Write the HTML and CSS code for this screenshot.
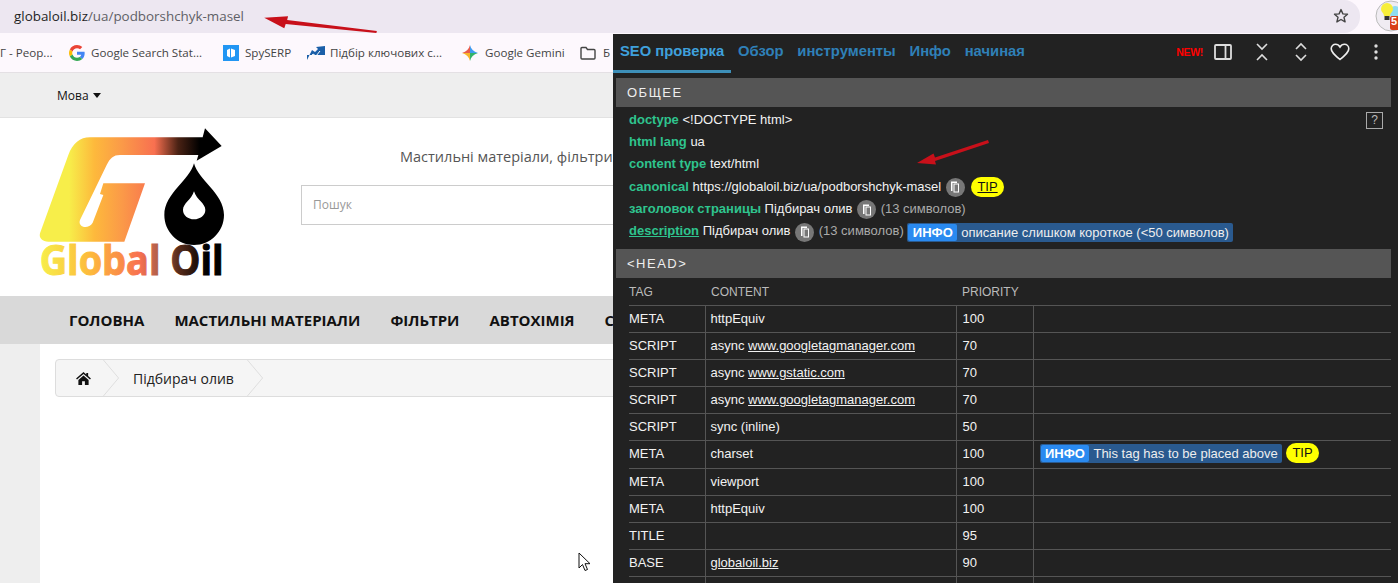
FILE: index.html
```html
<!DOCTYPE html>
<html lang="uk">
<head>
<meta charset="utf-8">
<title>Global Oil</title>
<link rel="stylesheet" href="styles.css">
</head>
<body>
<div class="screen">
  <header class="topbar">
    <div class="omnibox">
      <span class="url"><span class="url-host">globaloil.biz</span>/ua/podborshchyk-masel</span>
      <svg class="star" viewBox="0 0 16 16" width="16" height="16"><path d="M8 1.6l1.9 4.3 4.6.4-3.5 3 1.1 4.6L8 11.5 3.9 13.9 5 9.3l-3.5-3 4.6-.4z" fill="none" stroke="#444" stroke-width="1.4" stroke-linejoin="round"/></svg>
    </div>
    <div class="ext">
      <svg viewBox="0 0 32 32" width="32" height="32">
        <circle cx="16" cy="16" r="15" fill="#f0ecf2" stroke="#bbb"/>
        <circle cx="20" cy="12" r="6" fill="#8fdcf0"/>
        <path d="M6 9a6 6 0 0 1 12 0c0 3-3 4-3 7h-6c0-3-3-4-3-7z" fill="#f7ee3a"/>
        <rect x="9.500" y="16" width="5" height="4" fill="#333"/>
        <rect x="15" y="16" width="14" height="14" rx="2" fill="#d8401a"/>
      </svg>
      <span class="ext-badge">5</span>
    </div>
  </header>

  <nav class="bookmarks">
    <span class="bm bm-first">Г - Реор...</span>
    <span class="bm bm-google">
      <svg viewBox="0 0 48 48" width="16" height="16"><path fill="#EA4335" d="M24 9.500c3.500 0 6.700 1.300 9.100 3.400l6.800-6.800C35.800 2.400 30.200 0 24 0 14.600 0 6.500 5.400 2.600 13.200l7.900 6.200C12.400 13.600 17.700 9.500 24 9.500z"/><path fill="#4285F4" d="M47 24.500c0-1.600-.2-3.100-.4-4.500H24v9h12.900c-.6 3-2.300 5.500-4.800 7.200l7.700 6C44.300 38 47 31.800 47 24.500z"/><path fill="#FBBC05" d="M10.500 28.600c-.5-1.400-.8-3-.8-4.600s.3-3.200.8-4.600l-7.900-6.200C.9 16.500 0 20.100 0 24s.9 7.500 2.600 10.800z"/><path fill="#34A853" d="M24 48c6.500 0 11.900-2.100 15.900-5.800l-7.700-6c-2.200 1.500-4.900 2.300-8.200 2.300-6.300 0-11.600-4.100-13.500-9.900l-7.900 6.200C6.500 42.600 14.600 48 24 48z"/></svg>
      Google Search Stat...
    </span>
    <span class="bm bm-spy">
      <svg viewBox="0 0 16 16" width="16" height="16"><rect width="16" height="16" fill="#2196f3"/><path d="M4 5l3-1.500v9L4 11zM8 3.500l4 1.500v6l-4 1.500z" fill="#fff"/></svg>
      SpySERP
    </span>
    <span class="bm bm-tool">
      <svg viewBox="0 0 18 14" width="18" height="14"><path d="M0 14L5 4l3 2 3-3-2-2 9-1v9H0z" fill="#1a5fa8"/><path d="M3 12l3-4 3 2 4-5" fill="none" stroke="#fff" stroke-width="1"/></svg>
      Підбір ключових с...
    </span>
    <span class="bm bm-gem">
      <svg viewBox="0 0 16 16" width="16" height="16"><path d="M8 0c.9 4 3.600 6.900 8 8H8z" fill="#3f9bf0"/><path d="M8 0c-.9 4-3.600 6.900-8 8h8z" fill="#e85a4a"/><path d="M0 8c4.400 1.100 7.100 4 8 8V8z" fill="#f7b52c"/><path d="M16 8c-4.400 1.100-7.100 4-8 8V8z" fill="#33b36b"/></svg>
      Google Gemini
    </span>
    <span class="bm bm-folder">
      <svg viewBox="0 0 16 14" width="16" height="14"><path d="M1 2.500a1 1 0 0 1 1-1h4l1.500 2H14a1 1 0 0 1 1 1V12a1 1 0 0 1-1 1H2a1 1 0 0 1-1-1z" fill="none" stroke="#444" stroke-width="1.400"/></svg>
      Б
    </span>
  </nav>

  <main class="site">
    <div class="site-top"><span class="lang">Мова</span><span class="caret"></span></div>
    <div class="site-head">
      <svg class="logo" viewBox="0 0 660 510" width="220" height="170">
        <defs>
          <linearGradient id="logoG" gradientUnits="userSpaceOnUse" x1="60" y1="0" x2="605" y2="0">
            <stop offset="0" stop-color="#f7ee4a"/><stop offset=".16" stop-color="#f7ee4a"/><stop offset=".3" stop-color="#fdb93c"/><stop offset=".45" stop-color="#fb9a48"/><stop offset=".63" stop-color="#f87050"/><stop offset=".76" stop-color="#4a2214"/><stop offset=".88" stop-color="#000"/>
          </linearGradient>
          <linearGradient id="logoT" gradientUnits="userSpaceOnUse" x1="60" y1="0" x2="605" y2="0">
            <stop offset="0" stop-color="#f7ee4a"/><stop offset=".28" stop-color="#fdb93c"/><stop offset=".55" stop-color="#f87050"/><stop offset=".68" stop-color="#9a5a48"/><stop offset=".76" stop-color="#5a2c1a"/><stop offset=".92" stop-color="#000"/>
          </linearGradient>
        </defs>
        <path fill="url(#logoG)" d="M60 340L145 105C158 70 180 52 210 52H548L555 25L605 78L530 122L535 105H300C280 105 270 115 260 135L180 300C172 322 205 330 218 308L250 225L240 222L250 190H375L313 365H85C68 365 56 355 60 340Z"/>
        <path fill="#000" fill-rule="evenodd" d="M522 130C510 180 433 220 433 285C433 335 473 375 522 375C571 375 612 335 612 285C612 220 534 180 522 130ZM522 214C530 240 556 250 556 270C556 286 540 298 522 298C504 298 489 286 489 270C489 250 514 240 522 214Z"/>
        <text class="logo-text" x="59" y="465" textLength="552" lengthAdjust="spacingAndGlyphs" fill="url(#logoT)" stroke="url(#logoT)" stroke-width="3">Global Oil</text>
      </svg>
      <div class="head-right">
        <div class="tagline">Мастильні матеріали, фільтри</div>
        <div class="search">Пошук</div>
      </div>
    </div>
    <div class="menu">
      <span>ГОЛОВНА</span><span>МАСТИЛЬНІ МАТЕРІАЛИ</span><span>ФІЛЬТРИ</span><span>АВТОХІМІЯ</span><span>С</span>
    </div>
    <div class="content-wrap">
      <div class="content">
        <div class="crumbs">
          <svg class="home" viewBox="0 0 16 14" width="15" height="13"><path d="M8 0L0 7l1 1.200L8 2.200l7 6L16 7l-3-2.600V1h-2v1.700zM2.500 8.500V14H6.500V10h3v4h4V8.500L8 3.800z" fill="#111"/></svg>
          <svg class="chev" viewBox="0 0 18 38" width="18" height="36"><path d="M1 0L17 19L1 38" fill="none" stroke="#ddd"/></svg>
          <span class="crumb-text">Підбирач олив</span>
          <svg class="chev" viewBox="0 0 18 38" width="18" height="36"><path d="M1 0L17 19L1 38" fill="none" stroke="#ddd"/></svg>
        </div>
      </div>
    </div>
  </main>

  <aside class="panel">
    <div class="tabs">
      <span class="tab tab-active">SEO проверка</span>
      <span class="tab">Обзор</span>
      <span class="tab">инструменты</span>
      <span class="tab">Инфо</span>
      <span class="tab">начиная</span>
      <span class="tools">
        <span class="new">NEW!</span>
        <svg class="t-panel" viewBox="0 0 18 18" width="18" height="18"><rect x="1" y="2" width="16" height="14" rx="1" fill="none" stroke="#ddd" stroke-width="1.800"/><path d="M11.500 2v14" stroke="#ddd" stroke-width="1.800"/></svg>
        <svg class="t-collapse" viewBox="0 0 14 20" width="14" height="20"><path d="M2 2l5 5 5-5M2 18l5-5 5 5" fill="none" stroke="#ddd" stroke-width="1.600"/></svg>
        <svg class="t-expand" viewBox="0 0 14 20" width="14" height="20"><path d="M2 7l5-5 5 5M2 13l5 5 5-5" fill="none" stroke="#ddd" stroke-width="1.600"/></svg>
        <svg class="t-heart" viewBox="0 0 20 18" width="20" height="18"><path d="M10 16.500C4 11.500 1.200 9 1.200 5.700 1.200 3 3.300 1.300 5.600 1.300c1.800 0 3.400 1 4.400 2.700 1-1.700 2.600-2.700 4.400-2.700 2.300 0 4.400 1.700 4.400 4.400 0 3.300-2.800 5.800-8.800 10.800z" fill="none" stroke="#eee" stroke-width="1.600"/></svg>
        <svg class="t-dots" viewBox="0 0 4 16" width="4" height="16"><circle cx="2" cy="2" r="1.700" fill="#ddd"/><circle cx="2" cy="8" r="1.700" fill="#ddd"/><circle cx="2" cy="14" r="1.700" fill="#ddd"/></svg>
      </span>
    </div>

    <h2 class="section">ОБЩЕЕ</h2>
    <div class="general">
      <span class="help">?</span>
      <div class="row"><b>doctype</b> &lt;!DOCTYPE html&gt;</div>
      <div class="row"><b>html lang</b> ua</div>
      <div class="row"><b>content type</b> text/html</div>
      <div class="row"><b>canonical</b> https://globaloil.biz/ua/podborshchyk-masel
        <span class="copy"><svg viewBox="0 0 10 12" width="10" height="12"><path d="M1 .5h6v1.500H2.500v8H1zM3.500 2.500H9v9H3.500zM4.500 3.500v7H8v-7z" fill="#fff" fill-rule="evenodd"/></svg></span>
        <span class="tip">TIP</span></div>
      <div class="row"><b>заголовок страницы</b> Підбирач олив
        <span class="copy"><svg viewBox="0 0 10 12" width="10" height="12"><path d="M1 .5h6v1.500H2.500v8H1zM3.500 2.500H9v9H3.500zM4.500 3.500v7H8v-7z" fill="#fff" fill-rule="evenodd"/></svg></span>
        <span class="muted">(13 символов)</span></div>
      <div class="row"><b class="link-b">description</b> Підбирач олив
        <span class="copy"><svg viewBox="0 0 10 12" width="10" height="12"><path d="M1 .5h6v1.500H2.500v8H1zM3.500 2.500H9v9H3.500zM4.500 3.500v7H8v-7z" fill="#fff" fill-rule="evenodd"/></svg></span>
        <span class="muted">(13 символов)</span>
        <span class="info"><span class="info-k">ИНФО</span>описание слишком короткое (&lt;50 символов)</span></div>
    </div>

    <h2 class="section section-head">&lt;HEAD&gt;</h2>
    <table class="tags">
      <thead><tr><th>TAG</th><th>CONTENT</th><th>PRIORITY</th><th></th></tr></thead>
      <tbody>
        <tr><td>META</td><td>httpEquiv</td><td>100</td><td></td></tr>
        <tr><td>SCRIPT</td><td>async <u>www.googletagmanager.com</u></td><td>70</td><td></td></tr>
        <tr><td>SCRIPT</td><td>async <u>www.gstatic.com</u></td><td>70</td><td></td></tr>
        <tr><td>SCRIPT</td><td>async <u>www.googletagmanager.com</u></td><td>70</td><td></td></tr>
        <tr><td>SCRIPT</td><td>sync (inline)</td><td>50</td><td></td></tr>
        <tr class="tall"><td>META</td><td>charset</td><td>100</td><td><span class="info"><span class="info-k">ИНФО</span>This tag has to be placed above</span> <span class="tip tip-plain">TIP</span></td></tr>
        <tr><td>META</td><td>viewport</td><td>100</td><td></td></tr>
        <tr><td>META</td><td>httpEquiv</td><td>100</td><td></td></tr>
        <tr><td>TITLE</td><td></td><td>95</td><td></td></tr>
        <tr><td>BASE</td><td><u>globaloil.biz</u></td><td>90</td><td></td></tr>
        <tr><td></td><td></td><td></td><td></td></tr>
      </tbody>
    </table>
  </aside>

  <svg class="annot annot-a" viewBox="0 0 120 22" width="115" height="21"><path d="M118 20L24 8.500l1-4L0 6l21 11 1.500-4.500L117.500 22z" fill="#c8101a"/></svg>
  <svg class="annot annot-b" viewBox="0 0 72 26" width="72" height="26"><path d="M71 1L18 18.500l-1.500-4L0 24l19 1.500-1-3.500L72 4z" fill="#c8101a"/></svg>
  <svg class="annot annot-c" viewBox="0 0 14 20" width="14" height="20"><path d="M1 1v15l3.500-3.500 2.500 6 2.500-1-2.500-5.800h5z" fill="#fff" stroke="#111" stroke-width="1"/></svg>
</div>
</body>
</html>
```
FILE: styles.css
```css
* { box-sizing: border-box; }
html, body { margin: 0; padding: 0; }
body { width: 1398px; height: 583px; overflow: hidden; background: #fff; font-family: "Open Sans", sans-serif; }
.screen { position: relative; width: 1398px; height: 583px; overflow: hidden; display: flex; flex-direction: column; }

.topbar { height: 33px; background: #fdf7fd; display: flex; flex: none; }
.omnibox { width: 1360px; height: 33px; background: #ede7f1; border-radius: 0 16px 16px 0; display: flex; align-items: center; padding: 0 11px 1px 14px; justify-content: space-between; }
.url { font: 13.400px "Open Sans", sans-serif; color: #5f5f66; }
.url-host { color: #1f1f1f; }
.ext { position: relative; width: 38px; padding-left: 15px; overflow: hidden; }
.ext-badge { position: absolute; left: 31px; top: 15px; font: bold 11px "Liberation Sans", sans-serif; color: #fff; }

.bookmarks { height: 40px; background: #fdf8fd; border-bottom: 1px solid #e4e0e4; display: flex; align-items: center; font: 11.600px "Open Sans", sans-serif; color: #444; white-space: nowrap; flex: none; }
.bm { display: flex; align-items: center; gap: 6px; }
.bm-first { width: 69px; }
.bm-google { width: 154px; }
.bm-spy { width: 84px; }
.bm-tool { width: 155px; gap: 5px; }
.bm-gem { width: 118px; gap: 7px; }
.bm-folder { gap: 7px; }

.site { flex: 1; display: flex; flex-direction: column; min-height: 0; overflow: hidden; }
.site-top { height: 45px; background: #eee; border-bottom: 1px solid #e2e2e2; display: flex; align-items: center; gap: 4px; padding-left: 57px; font-size: 12px; color: #111; flex: none; }
.caret { width: 0; height: 0; border-left: 4.500px solid transparent; border-right: 4.500px solid transparent; border-top: 5px solid #111; }
.site-head { height: 178px; background: #fff; display: flex; flex: none; }
.logo { margin: 2px 0 0 20px; flex: none; }
.logo-text { font: 700 122px "Open Sans", sans-serif; }
.head-right { margin-left: 61px; flex: 1; }
.tagline { margin: 29px 0 0 99px; font-size: 14.500px; line-height: 20px; color: #555; white-space: nowrap; }
.search { margin-top: 18px; width: 420px; height: 40px; border: 1px solid #ccc; padding-left: 11px; font-size: 12px; line-height: 38px; color: #999; }
.menu { height: 48px; background: #d9d9d9; display: flex; align-items: center; gap: 30px; padding-left: 69px; font-weight: 700; font-size: 15px; color: #111; white-space: nowrap; flex: none; }
.content-wrap { flex: 1; background: #eee; padding-left: 40px; }
.content { height: 100%; background: #fff; padding: 15px 0 0 15px; }
.crumbs { height: 38px; background: #f5f5f5; border: 1px solid #ddd; border-radius: 4px; display: flex; align-items: center; padding-left: 20px; }
.home { flex: none; }
.chev { margin-left: 11px; flex: none; }
.crumb-text { margin-left: 13px; font-size: 14px; color: #222; white-space: nowrap; }
.crumb-text + .chev { margin-left: 12px; }

.panel { position: absolute; left: 613px; top: 34px; width: 785px; height: 549px; background: #222; color: #f2f2f2; font: 13px "Liberation Sans", sans-serif; overflow: hidden; }
.tabs { height: 39px; display: flex; align-items: center; padding: 0 0 6px 7px; gap: 13.800px; position: relative; font: 700 14.800px "Liberation Sans", sans-serif; }
.tabs::after { content: ""; position: absolute; left: 0; bottom: 0; width: 118px; height: 3px; background: #3d8fb8; }
.tab { color: #2f80b8; white-space: nowrap; }
.tab-active { color: #3fa0dc; }
.tools { margin-left: auto; display: flex; align-items: center; margin-top: 3px; }
.new { font: 700 10.500px "Liberation Sans", sans-serif; color: #f00; letter-spacing: -.3px; }
.t-panel { margin-left: 11px; }
.t-collapse { margin-left: 23px; }
.t-expand { margin-left: 25px; }
.t-heart { margin-left: 22px; }
.t-dots { margin: 0 20px 0 24px; }

.section { margin: 5px 7px 0 3px; height: 29px; background: #555; color: #eee; font: 400 13px/29px "Liberation Sans", sans-serif; letter-spacing: 1.500px; padding-left: 11px; }
.section-head { margin-top: 0; }
.general { position: relative; padding: 1.500px 0 0 16px; height: 142px; }
.row { height: 22.400px; line-height: 22.400px; white-space: nowrap; display: block; }
.row b { color: #2fc48e; font-weight: 700; }
.row b.link-b { text-decoration: underline; }
.help { position: absolute; right: 15px; top: 5px; width: 17px; height: 17px; border: 1px solid #aaa; color: #bbb; text-align: center; font-size: 12px; line-height: 15px; }
.copy { display: inline-flex; width: 19px; height: 19px; border-radius: 50%; background: #777; align-items: center; justify-content: center; vertical-align: middle; margin: 0 1px; }
.tip { display: inline-block; background: #ff0; color: #111; height: 20px; line-height: 20px; border-radius: 10px; padding: 0 6px; margin-left: 2px; text-decoration: underline; vertical-align: middle; }
.tip-plain { text-decoration: none; margin-left: 1px; }
.muted { color: #aaa; }
.info { display: inline-block; height: 19px; line-height: 17px; background: #2a5a8f; color: #eee; border-radius: 2px; padding: 1px 4px 1px 1px; vertical-align: middle; }
.info-k { display: inline-block; background: #2a8af0; color: #fff; font-weight: 700; padding: 0 4.500px; margin-right: 4px; border-radius: 2px; }

.tags { border-collapse: collapse; margin: 0 0 0 16px; width: 762px; table-layout: fixed; }
.tags th { height: 27px; padding: 2px 0 0 0; font-size: 12px; font-weight: 400; color: #bbb; text-align: left; border-bottom: 1px solid #555; }
.tags td { height: 27px; padding: 0 0 0 6px; border-bottom: 1px solid #555; border-left: 1px solid #555; white-space: nowrap; }
.tags td:first-child { padding-left: 0; border-left: 0; }
.tags td:nth-child(2) { padding-left: 5px; }
.tags th:nth-child(1), .tags td:nth-child(1) { width: 76px; }
.tags th:nth-child(2), .tags td:nth-child(2) { width: 251px; }
.tags th:nth-child(3), .tags td:nth-child(3) { width: 77px; }
.tags th:nth-child(2), .tags th:nth-child(3) { padding-left: 6px; }
.tags .tall td { height: 28px; padding-bottom: 2px; }

.annot { position: absolute; }
.annot-a { left: 264px; top: 12px; }
.annot-b { left: 917px; top: 139px; }
.annot-c { left: 578px; top: 552px; }
```
